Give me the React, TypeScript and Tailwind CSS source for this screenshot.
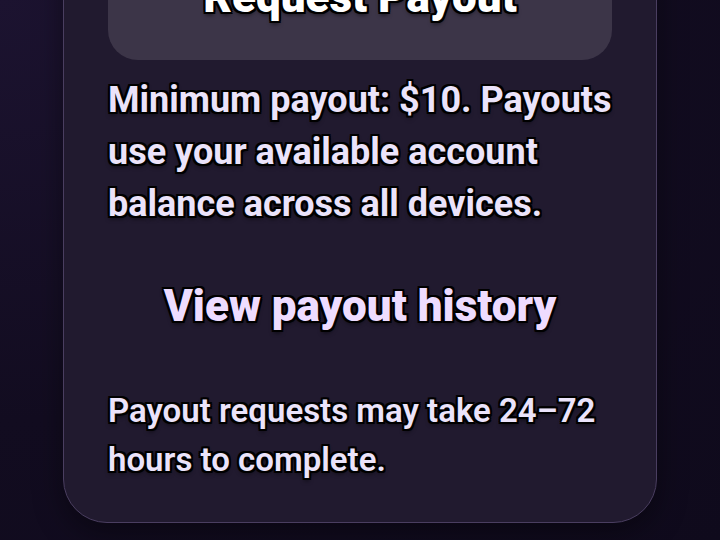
const outline =
  '[text-shadow:-2px_-2px_0_#000,2px_-2px_0_#000,-2px_2px_0_#000,2px_2px_0_#000,0_-2px_0_#000,0_2px_0_#000,-2px_0_0_#000,2px_0_0_#000,0_3px_4px_rgba(0,0,0,0.6)]'

export default function App() {
  return (
    <div
      className="h-[540px] w-[720px] overflow-hidden bg-[radial-gradient(ellipse_at_top_left,#1c1330_0%,#120c20_55%,#0f0a1c_100%)]"
      style={{ fontFamily: 'Roboto, "Liberation Sans", sans-serif' }}
    >
      <div className="mx-[63px] -mt-[106px] rounded-[44px] border border-[#4a3e60] bg-[#211a2f] px-[44px] pb-[38px] pt-[45px] shadow-[0_10px_30px_rgba(0,0,0,0.4)]">
        <button className="flex h-[120px] w-full items-center justify-center rounded-[30px] bg-[#3c3548] pb-[6px]">
          <span className={`text-[44px] font-black leading-[44px] text-white ${outline}`}>Request Payout</span>
        </button>

        <p className={`mt-[14px] text-[36px] font-bold leading-[52px] text-[#ebe3fa] ${outline}`}>
          Minimum payout: $10. Payouts use your available account balance across all devices.
        </p>

        <div className="mt-[50px] text-center text-[44px] leading-[52px]">
          <a className={`font-black text-[#eedcff] ${outline}`}>View payout history</a>
        </div>

        <p className={`mt-[54px] text-[33px] font-semibold leading-[49px] text-[#ebe3fa] ${outline}`}>
          Payout requests may take 24–72 hours to complete.
        </p>
      </div>
    </div>
  )
}
